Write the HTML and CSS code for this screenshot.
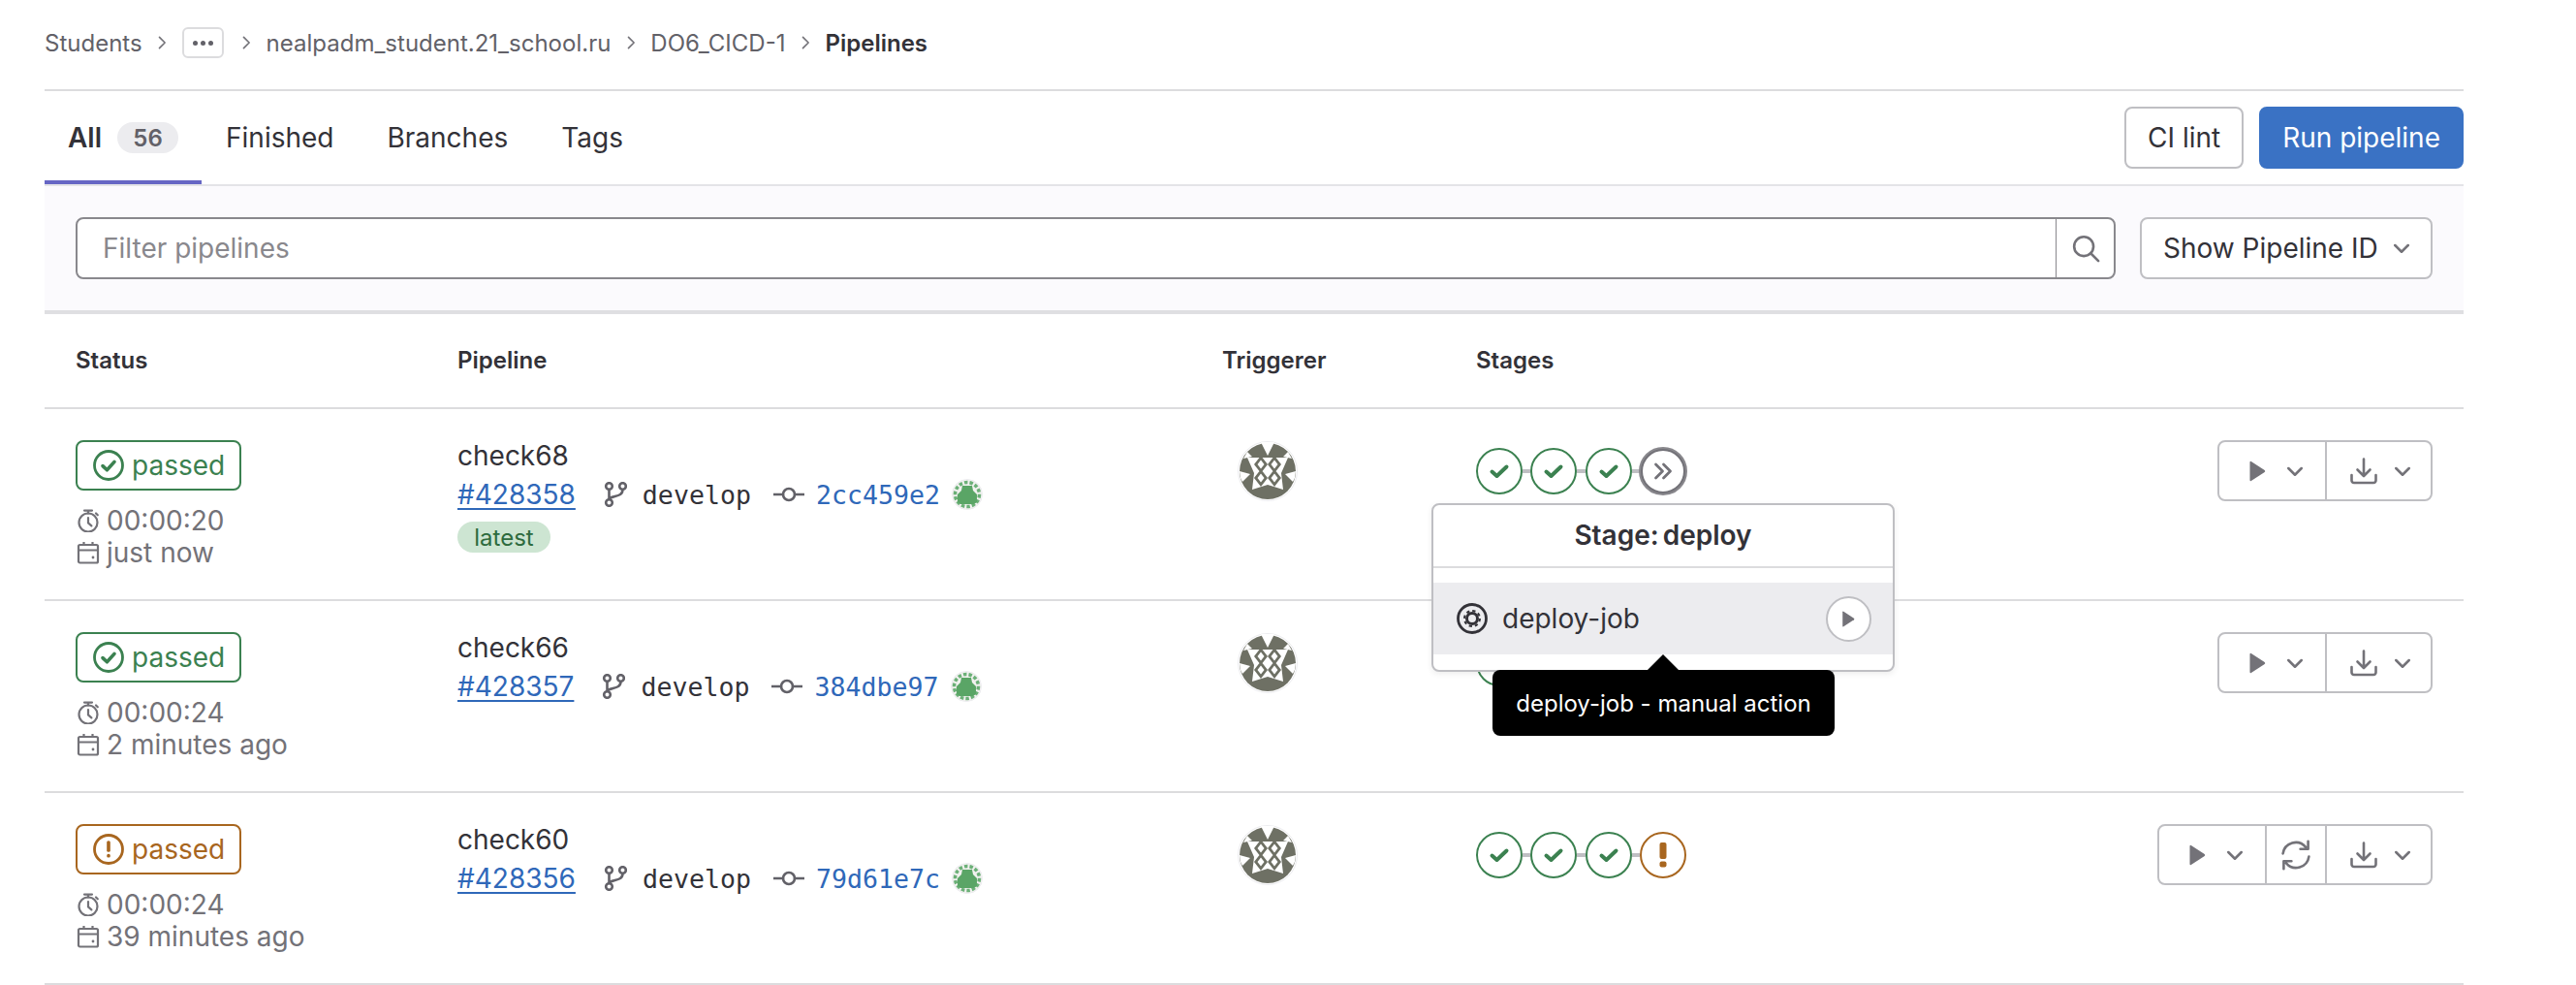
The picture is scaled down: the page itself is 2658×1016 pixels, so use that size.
FILE: index.html
```html
<!DOCTYPE html>
<html lang="en">
<head>
<meta charset="utf-8">
<title>Pipelines</title>
<link rel="stylesheet" href="styles.css">
</head>
<body>
<svg class="defs" aria-hidden="true">
  <symbol id="i-chev-sm" viewBox="0 0 16 16"><polyline points="6,3.5 10.5,8 6,12.5" fill="none" stroke="currentColor" stroke-width="1.3" stroke-linecap="round" stroke-linejoin="round"/></symbol>
  <symbol id="i-chev" viewBox="0 0 16 16"><polyline points="3.5,6 8,10.5 12.5,6" fill="none" stroke="currentColor" stroke-width="1.7" stroke-linecap="round" stroke-linejoin="round"/></symbol>
  <symbol id="i-ok" viewBox="0 0 16 16"><circle cx="8" cy="8" r="7.25" fill="none" stroke="currentColor" stroke-width="1.4"/><polyline points="5,8.3 7.2,10.4 11,6.2" fill="none" stroke="currentColor" stroke-width="1.8" stroke-linecap="round" stroke-linejoin="round"/></symbol>
  <symbol id="i-warn" viewBox="0 0 16 16"><circle cx="8" cy="8" r="7.25" fill="none" stroke="currentColor" stroke-width="1.4"/><rect x="7.1" y="3.6" width="1.8" height="5.8" rx=".8" fill="currentColor"/><rect x="7.1" y="10.4" width="1.8" height="1.9" rx=".8" fill="currentColor"/></symbol>
  <symbol id="i-clock" viewBox="0 0 24 24"><circle cx="12" cy="14" r="9.5" fill="none" stroke="currentColor" stroke-width="2.2"/><path d="M8 1.6h8M12 1.6v3M12 9v5.4l3.4 3M20 4.5l1.8 1.8" fill="none" stroke="currentColor" stroke-width="2.2" stroke-linecap="round" stroke-linejoin="round"/></symbol>
  <symbol id="i-cal" viewBox="0 0 24 24"><rect x="2" y="4" width="20" height="18.5" rx="1.5" fill="none" stroke="currentColor" stroke-width="2.2"/><path d="M2 9.5h20M7.5 1v4M16.5 1v4" fill="none" stroke="currentColor" stroke-width="2.2"/><circle cx="17" cy="17" r="1.4" fill="currentColor"/></symbol>
  <symbol id="i-branch" viewBox="0 0 24 26"><circle cx="5.5" cy="4.5" r="3.3" fill="none" stroke="currentColor" stroke-width="2.6"/><circle cx="5.5" cy="21.5" r="3.3" fill="none" stroke="currentColor" stroke-width="2.6"/><circle cx="19.5" cy="4.5" r="3.3" fill="none" stroke="currentColor" stroke-width="2.6"/><path d="M5.5 8v10M19.5 8c0 5-4 6-8 7s-6 1.5-6 4" fill="none" stroke="currentColor" stroke-width="2.6"/></symbol>
  <symbol id="i-commit" viewBox="0 0 32 16"><circle cx="16" cy="8" r="6" fill="none" stroke="currentColor" stroke-width="2.6"/><path d="M.5 8H10M22 8h9.5" fill="none" stroke="currentColor" stroke-width="2.6" stroke-linecap="round"/></symbol>
  <symbol id="i-search" viewBox="0 0 16 16"><circle cx="7" cy="7" r="5.3" fill="none" stroke="currentColor" stroke-width="1.4"/><path d="M10.8 10.800L15 15" fill="none" stroke="currentColor" stroke-width="1.4" stroke-linecap="round"/></symbol>
  <symbol id="i-play" viewBox="0 0 16 20"><path d="M1.2 1.5a.8.8 0 0 1 1.2-.6l12.6 8.300a1 1 0 0 1 0 1.600L2.400 19.100a.8.800 0 0 1-1.200-.6z" fill="currentColor"/></symbol>
  <symbol id="i-download" viewBox="0 0 28 28"><path d="M14 1.500v17M7.500 12.500l6.500 6.500 6.500-6.500M1.500 18v5.500a2.500 2.500 0 0 0 2.500 2.500h20a2.500 2.500 0 0 0 2.500-2.500V18" fill="none" stroke="currentColor" stroke-width="2.6" stroke-linecap="round" stroke-linejoin="round"/></symbol>
  <symbol id="i-retry" viewBox="0 0 16 16"><path d="M1.300 7.200A6.700 6.700 0 0 1 13 3.800M14.700 8.800A6.700 6.700 0 0 1 3 12.200M14.300 .9v4H10.300M1.700 15.100v-4H5.700" fill="none" stroke="currentColor" stroke-width="1.3" stroke-linecap="round" stroke-linejoin="round"/></symbol>
  <symbol id="i-stage-ok" viewBox="0 0 24 24"><polyline points="4.5,12.5 9.5,17 19.5,7.5" fill="none" stroke="currentColor" stroke-width="4" stroke-linecap="round" stroke-linejoin="round"/></symbol>
  <symbol id="i-stage-warn" viewBox="0 0 24 28"><rect x="8.500" y="1" width="7" height="17" rx="2" fill="currentColor"/><rect x="8.500" y="20.500" width="7" height="6" rx="2" fill="currentColor"/></symbol>
  <symbol id="i-skip" viewBox="0 0 20 18"><path d="M2.500 2l7 7-7 7M10.500 2l7 7-7 7" fill="none" stroke="currentColor" stroke-width="2.8" stroke-linecap="round" stroke-linejoin="round"/></symbol>
  <symbol id="i-gear" viewBox="0 0 32 32"><circle cx="16" cy="16" r="14.500" fill="none" stroke="currentColor" stroke-width="2.8"/><circle cx="16" cy="16" r="5.500" fill="none" stroke="currentColor" stroke-width="3"/><circle cx="16" cy="16" r="8" fill="none" stroke="currentColor" stroke-width="2" stroke-dasharray="3.300 2.980"/></symbol>
  <symbol id="i-user" viewBox="0 0 62 62">
    <circle cx="31" cy="31" r="30.500" fill="#fff" stroke="#ececef"/>
    <circle cx="31" cy="31" r="29" fill="#6e7064"/>
    <path d="M24 1L31 15 38 1zM2 31L13 34 5 42 3 38zM60 31L49 34 57 42 59 38zM10 11L15 16 6 18zM52 11L47 16 56 18z" fill="#fff"/>
    <path d="M10 17H52L45 33 47 50 31 45 15 50 17 33z" fill="#fff"/>
    <path d="M24 15L31 24 24 33 17 24zM38 15L45 24 38 33 31 24zM24 29L31 38 24 47 17 38zM38 29L45 38 38 47 31 38z" fill="#6e7064"/>
    <path d="M24 19.500L27.500 24 24 28.500 20.500 24zM38 19.500L41.500 24 38 28.500 34.500 24zM24 33.500L27.500 38 24 42.500 20.500 38zM38 33.500L41.500 38 38 42.500 34.500 38z" fill="#fff"/>
  </symbol>
  <symbol id="i-project" viewBox="0 0 32 32">
    <circle cx="16" cy="16" r="15.500" fill="#f1f1ef" stroke="#ececef"/>
    <circle cx="16" cy="16" r="12.500" fill="none" stroke="#6bb077" stroke-width="3.500" stroke-dasharray="3.500 2.050"/>
    <path d="M11 7h10l1 5 4 4v8l-3 2H9l-3-2v-8l4-4z" fill="#5aa566"/>
  </symbol>
</svg>

<main class="page">
  <nav class="crumbs">
    <span>Students</span>
    <svg class="sep"><use href="#i-chev-sm"/></svg>
    <span class="crumb-more"><i></i><i></i><i></i></span>
    <svg class="sep"><use href="#i-chev-sm"/></svg>
    <span>nealpadm_student.21_school.ru</span>
    <svg class="sep"><use href="#i-chev-sm"/></svg>
    <span>DO6_CICD-1</span>
    <svg class="sep"><use href="#i-chev-sm"/></svg>
    <strong>Pipelines</strong>
  </nav>

  <div class="tabs-bar">
    <div class="tabs">
      <a class="tab tab-active">All <span class="count">56</span></a>
      <a class="tab">Finished</a>
      <a class="tab">Branches</a>
      <a class="tab">Tags</a>
    </div>
    <div class="tab-actions">
      <button class="btn">CI lint</button>
      <button class="btn btn-primary">Run pipeline</button>
    </div>
  </div>

  <div class="filter-bar">
    <div class="filter">
      <span class="filter-input">Filter pipelines</span>
      <span class="filter-search"><svg class="icon-30"><use href="#i-search"/></svg></span>
    </div>
    <button class="btn btn-select">Show Pipeline ID <svg class="icon-chev"><use href="#i-chev"/></svg></button>
  </div>

  <div class="thead">
    <div>Status</div>
    <div>Pipeline</div>
    <div>Triggerer</div>
    <div>Stages</div>
  </div>

  <div class="row">
    <div class="cell-status">
      <span class="badge badge-ok"><svg class="icon-32"><use href="#i-ok"/></svg>passed</span>
      <div class="meta meta-first"><svg class="icon-24"><use href="#i-clock"/></svg>00:00:20</div>
      <div class="meta"><svg class="icon-24"><use href="#i-cal"/></svg>just now</div>
    </div>
    <div class="cell-pipeline">
      <div class="title">check68</div>
      <div class="refs">
        <a class="pid">#428358</a>
        <svg class="icon-branch"><use href="#i-branch"/></svg>
        <span class="mono">develop</span>
        <svg class="icon-commit"><use href="#i-commit"/></svg>
        <a class="sha mono">2cc459e2</a>
        <svg class="icon-project"><use href="#i-project"/></svg>
      </div>
      <span class="tag">latest</span>
    </div>
    <div class="cell-user"><svg class="avatar"><use href="#i-user"/></svg></div>
    <div class="stages">
      <span class="stage stage-ok"><svg class="icon-24"><use href="#i-stage-ok"/></svg></span>
      <span class="link"></span>
      <span class="stage stage-ok"><svg class="icon-24"><use href="#i-stage-ok"/></svg></span>
      <span class="link"></span>
      <span class="stage stage-ok"><svg class="icon-24"><use href="#i-stage-ok"/></svg></span>
      <span class="link"></span>
      <span class="stage stage-manual">
        <svg class="icon-skip"><use href="#i-skip"/></svg>
        <div class="popover">
          <div class="popover-head">Stage: deploy</div>
          <div class="popover-list">
            <div class="job">
              <svg class="icon-32 job-icon"><use href="#i-gear"/></svg>
              <span class="job-name">deploy-job</span>
              <span class="job-play"><svg class="icon-play-sm"><use href="#i-play"/></svg></span>
              <div class="tooltip">deploy-job - manual action</div>
            </div>
          </div>
        </div>
      </span>
    </div>
    <div class="actions">
      <button class="act act-play"><svg class="icon-play"><use href="#i-play"/></svg><svg class="icon-chev"><use href="#i-chev"/></svg></button>
      <button class="act act-dl"><svg class="icon-dl"><use href="#i-download"/></svg><svg class="icon-chev"><use href="#i-chev"/></svg></button>
    </div>
  </div>

  <div class="row">
    <div class="cell-status">
      <span class="badge badge-ok"><svg class="icon-32"><use href="#i-ok"/></svg>passed</span>
      <div class="meta meta-first"><svg class="icon-24"><use href="#i-clock"/></svg>00:00:24</div>
      <div class="meta"><svg class="icon-24"><use href="#i-cal"/></svg>2 minutes ago</div>
    </div>
    <div class="cell-pipeline">
      <div class="title">check66</div>
      <div class="refs">
        <a class="pid">#428357</a>
        <svg class="icon-branch"><use href="#i-branch"/></svg>
        <span class="mono">develop</span>
        <svg class="icon-commit"><use href="#i-commit"/></svg>
        <a class="sha mono">384dbe97</a>
        <svg class="icon-project"><use href="#i-project"/></svg>
      </div>
    </div>
    <div class="cell-user"><svg class="avatar"><use href="#i-user"/></svg></div>
    <div class="stages">
      <span class="stage stage-ok"><svg class="icon-24"><use href="#i-stage-ok"/></svg></span>
      <span class="link"></span>
      <span class="stage stage-ok"><svg class="icon-24"><use href="#i-stage-ok"/></svg></span>
      <span class="link"></span>
      <span class="stage stage-ok"><svg class="icon-24"><use href="#i-stage-ok"/></svg></span>
    </div>
    <div class="actions">
      <button class="act act-play"><svg class="icon-play"><use href="#i-play"/></svg><svg class="icon-chev"><use href="#i-chev"/></svg></button>
      <button class="act act-dl"><svg class="icon-dl"><use href="#i-download"/></svg><svg class="icon-chev"><use href="#i-chev"/></svg></button>
    </div>
  </div>

  <div class="row">
    <div class="cell-status">
      <span class="badge badge-warn"><svg class="icon-32"><use href="#i-warn"/></svg>passed</span>
      <div class="meta meta-first"><svg class="icon-24"><use href="#i-clock"/></svg>00:00:24</div>
      <div class="meta"><svg class="icon-24"><use href="#i-cal"/></svg>39 minutes ago</div>
    </div>
    <div class="cell-pipeline">
      <div class="title">check60</div>
      <div class="refs">
        <a class="pid">#428356</a>
        <svg class="icon-branch"><use href="#i-branch"/></svg>
        <span class="mono">develop</span>
        <svg class="icon-commit"><use href="#i-commit"/></svg>
        <a class="sha mono">79d61e7c</a>
        <svg class="icon-project"><use href="#i-project"/></svg>
      </div>
    </div>
    <div class="cell-user"><svg class="avatar"><use href="#i-user"/></svg></div>
    <div class="stages">
      <span class="stage stage-ok"><svg class="icon-24"><use href="#i-stage-ok"/></svg></span>
      <span class="link"></span>
      <span class="stage stage-ok"><svg class="icon-24"><use href="#i-stage-ok"/></svg></span>
      <span class="link"></span>
      <span class="stage stage-ok"><svg class="icon-24"><use href="#i-stage-ok"/></svg></span>
      <span class="link"></span>
      <span class="stage stage-warn"><svg class="icon-stage-warn"><use href="#i-stage-warn"/></svg></span>
    </div>
    <div class="actions">
      <button class="act act-play"><svg class="icon-play"><use href="#i-play"/></svg><svg class="icon-chev"><use href="#i-chev"/></svg></button>
      <button class="act act-retry"><svg class="icon-32"><use href="#i-retry"/></svg></button>
      <button class="act act-dl"><svg class="icon-dl"><use href="#i-download"/></svg><svg class="icon-chev"><use href="#i-chev"/></svg></button>
    </div>
  </div>
</main>
</body>
</html>
```

FILE: styles.css
```css
* { box-sizing: border-box; }
html, body { margin: 0; padding: 0; background: #fff; }
body {
  font-family: Inter, "Liberation Sans", sans-serif;
  font-size: 28px;
  color: #333238;
  overflow: hidden;
}
.defs { display: none; }
svg { display: block; flex: none; }

.page { padding: 0 116px 0 46px; height: 1016px; }

/* breadcrumbs */
.crumbs {
  height: 94px;
  border-bottom: 2px solid #dcdcde;
  display: flex;
  align-items: center;
  padding-bottom: 4px;
  font-size: 24px;
  color: #626168;
}
.crumbs strong { font-weight: 600; color: #333238; }
.sep { width: 20px; height: 20px; margin: 0 10.5px; color: #737278; }
.crumb-more {
  width: 43px; height: 32px;
  margin-right: 3px;
  border: 2px solid #dcdcde;
  border-radius: 6px;
  display: flex; align-items: center; justify-content: center; gap: 3px;
}
.crumb-more i { width: 5px; height: 5px; border-radius: 50%; background: #626168; }

/* tabs */
.tabs-bar {
  height: 98px;
  border-bottom: 2px solid #e4e4e7;
  display: flex;
  justify-content: space-between;
  align-items: flex-start;
}
.tabs { display: flex; height: 96px; }
.tab {
  display: flex; align-items: center; gap: 16px;
  padding: 0 24px;
  margin-right: 7px;
  height: 96px;
}
.tab:first-child { margin-right: 1px; }
.tab-active {
  font-weight: 600;
  box-shadow: inset 0 -4px 0 #6666c4;
}
.count {
  width: 63px; height: 32px;
  border-radius: 16px;
  background: #ececef;
  color: #626168;
  font-size: 24px;
  font-weight: 600;
  display: flex; align-items: center; justify-content: center;
}
.tab-actions { display: flex; gap: 16px; padding-top: 16px; }
.btn {
  font: inherit;
  height: 64px;
  padding: 0 22px;
  background: #fff;
  color: #333238;
  border: 2px solid #bfbfc3;
  border-radius: 8px;
  display: flex; align-items: center;
}
.btn-primary { background: #3a72c4; border-color: #3a72c4; color: #fff; }

/* filter */
.filter-bar {
  height: 132px;
  padding: 32px 32px 36px;
  background: #fbfafd;
  border-bottom: 4px solid #dfdfe2;
  display: flex;
  gap: 25px;
}
.filter {
  flex: 1;
  height: 64px;
  display: flex;
  background: #fff;
  border: 2px solid #89888d;
  border-radius: 8px;
}
.filter-input { flex: 1; padding-left: 26px; display: flex; align-items: center; color: #89888d; }
.filter-search {
  width: 60px;
  border-left: 1.5px solid #89888d;
  display: flex; align-items: center; justify-content: center;
  color: #737278;
}
.btn-select { width: 302px; justify-content: space-between; padding: 0 18px 0 22px; }

/* table */
.thead, .row {
  display: grid;
  padding-left: 32px;
  padding-right: 32px;
  border-bottom: 2px solid #dcdcde;
}
.thead {
  grid-template-columns: 394px 789px 262px 1fr;
  height: 98px;
  padding-bottom: 2px;
  align-items: center;
  font-size: 24px;
  font-weight: 600;
}
.row { height: 198px; padding-top: 32px; grid-template-columns: 394px 789px 262px 1fr auto; }

.cell-status { display: flex; flex-direction: column; align-items: flex-start; }
.badge {
  width: 171px; height: 52px;
  border: 2px solid currentColor;
  border-radius: 8px;
  display: flex; align-items: center; gap: 8px;
  padding-left: 16px;
}
.badge-ok { color: #3b8150; }
.badge-warn { color: #a8661f; }
.meta { height: 33px; display: flex; align-items: center; gap: 7px; color: #737278; padding-left: 1px; }
.meta-first { margin-top: 14px; }

.title { height: 32px; line-height: 32px; }
.refs { height: 32px; margin-top: 8px; display: flex; align-items: center; color: #333238; }
.pid { color: #2f68b9; text-decoration: underline; text-underline-offset: 4px; text-decoration-thickness: 2px; }
.mono { font-family: "DejaVu Sans Mono", "Liberation Mono", monospace; font-size: 26.6px; }
.sha { color: #2f68b9; }
.icon-branch { width: 24px; height: 26px; margin: 0 16px 0 29px; color: #626168; }
.icon-commit { width: 32px; height: 16px; margin: 0 12px 0 23px; color: #626168; }
.icon-project { width: 32px; height: 32px; margin-left: 12px; }
.tag {
  display: inline-flex; align-items: center; justify-content: center;
  width: 96px; height: 32px; margin-top: 12px;
  border-radius: 16px;
  background: #cde5d2;
  color: #2e6b3e;
  font-size: 24px;
}

.cell-user { padding-left: 16px; }
.avatar { width: 62px; height: 62px; margin-top: 1px; }

.stages { display: flex; align-items: center; height: 64px; }
.stage {
  position: relative;
  width: 48px; height: 48px;
  border-radius: 50%;
  border: 2px solid currentColor;
  background: #fff;
  display: flex; align-items: center; justify-content: center;
}
.stage-ok { color: #3b8150; }
.stage-warn { color: #a8661f; }
.stage-manual {
  color: #737278;
  border-width: 3px;
  outline: 2px solid #89888d;
  outline-offset: -1px;
}
.link { width: 8.33px; height: 4px; background: #bfbfc3; }
.icon-skip { width: 20px; height: 18px; }
.icon-stage-warn { width: 24px; height: 28px; }

.popover {
  position: absolute;
  top: 54px; left: 50%;
  transform: translateX(-50%);
  width: 478px; height: 174px;
  background: #fff;
  border: 2px solid #bfbfc3;
  border-radius: 8px;
  box-shadow: 0 2px 6px rgba(0,0,0,.08);
  color: #333238;
  z-index: 10;
}
.popover-head {
  height: 65px;
  border-bottom: 2px solid #dcdcde;
  padding-bottom: 2px;
  display: flex; align-items: center; justify-content: center;
  font-weight: 600;
  font-size: 28px;
  word-spacing: -3px;
}
.popover-list { padding-top: 15px; }
.job {
  position: relative;
  height: 74px;
  background: #ececef;
  display: flex; align-items: center;
  padding: 0 22px 0 24px;
  color: #333238;
}
.job-name { margin-left: 15px; flex: 1; }
.job-play {
  width: 47px; height: 47px;
  border-radius: 50%;
  background: #fff;
  border: 2px solid #bfbfc3;
  color: #737278;
  display: flex; align-items: center; justify-content: center;
}
.tooltip {
  position: absolute;
  top: 90px; left: 61px;
  width: 353px; height: 68px;
  background: #000;
  color: #fff;
  border-radius: 8px;
  font-size: 24px;
  display: flex; align-items: center; justify-content: center;
  white-space: nowrap;
}
.tooltip::before {
  content: "";
  position: absolute;
  top: -16px; left: 50%;
  margin-left: -16px;
  border: 16px solid transparent;
  border-top: 0;
  border-bottom: 16px solid #000;
}

.actions { display: flex; height: 63px; border: 2px solid #bfbfc3; border-radius: 8px; }
.act {
  font: inherit;
  background: none;
  border: 0;
  border-left: 2px solid #bfbfc3;
  padding: 0;
  color: #737278;
  width: 109px;
  display: flex; align-items: center; justify-content: center;
}
.act-play { border-left: 0; gap: 18px; padding-left: 11px; }
.act-dl { gap: 14px; padding-left: 6px; }
.act-retry { width: 62px; }

.icon-24 { width: 24px; height: 24px; }
.icon-30 { width: 30px; height: 30px; }
.icon-32 { width: 32px; height: 32px; }
.icon-chev { width: 24px; height: 24px; color: #737278; }
.icon-play { width: 18px; height: 22px; }
.icon-play-sm { width: 14px; height: 17px; }
.icon-dl { width: 28px; height: 28px; }
```
